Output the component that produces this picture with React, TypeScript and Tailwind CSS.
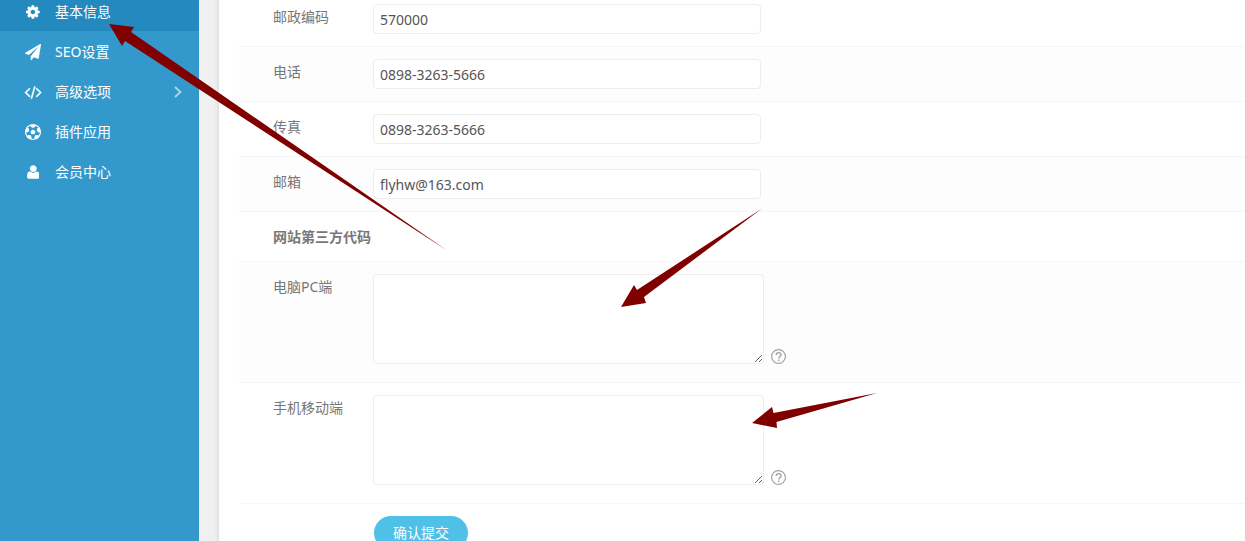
import type { ReactNode } from "react";

type IconProps = { box: string; d: string; className: string; bold?: boolean };

function Glyph({ box, d, className, bold }: IconProps) {
  return (
    <svg viewBox={box} className={className} fill="currentColor" stroke="currentColor" strokeWidth={bold ? 60 : 0} aria-hidden="true">
      <path d={d} />
    </svg>
  );
}

const COG =
  "M1024 896q0-106-75-181t-181-75-181 75-75 181 75 181 181 75 181-75 75-181zm512-109v222q0 12-8 23t-20 13l-185 28q-19 54-39 91 35 50 107 138 10 12 10 25t-9 23q-27 37-99 108t-94 71q-12 0-26-9l-138-108q-44 23-91 38-16 136-29 186-7 28-36 28h-222q-14 0-24.5-8.5t-11.5-21.5l-28-184q-49-16-90-37l-141 107q-10 9-25 9-14 0-25-11-126-114-165-168-7-10-7-23 0-12 8-23 15-21 51-66.5t54-70.5q-27-50-41-99l-183-27q-13-2-21-12.5t-8-23.5v-222q0-12 8-23t19-13l186-28q14-46 39-92-40-57-107-138-10-12-10-24 0-10 9-23 26-36 98.5-107.5t94.5-71.5q13 0 26 10l138 107q44-23 91-38 16-136 29-186 7-28 36-28h222q14 0 24.5 8.5t11.5 21.5l28 184q49 16 90 37l142-107q9-9 24-9 13 0 25 10 129 119 165 170 7 8 7 22 0 12-8 23-15 21-51 66.5t-54 70.5q26 50 41 98l183 28q13 2 21 12.5t8 23.5z";
const PLANE =
  "M1764 11q33 24 27 64l-256 1536q-5 29-32 45-14 8-31 8-11 0-24-5l-453-185-242 295q-18 23-49 23-13 0-22-4-19-7-30.5-23.5t-11.5-36.5v-349l864-1059-1069 925-395-162q-37-14-40-55-2-40 32-59l1664-960q15-9 32-9 20 0 36 11z";
const CODE =
  "M617 1399l-50 50q-10 10-23 10t-23-10l-466-466q-10-10-10-23t10-23l466-466q10-10 23-10t23 10l50 50q10 10 10 23t-10 23l-393 393 393 393q10 10 10 23t-10 23zm591-1067l-373 1291q-4 13-15.5 19.5t-23.5 2.5l-62-17q-13-4-19.5-15.5t-2.5-24.5l373-1291q4-13 15.5-19.5t23.5-2.5l62 17q13 4 19.5 15.5t2.5 24.5zm657 651l-466 466q-10 10-23 10t-23-10l-50-50q-10-10-10-23t10-23l393-393-393-393q-10-10-10-23t10-23l50-50q10-10 23-10t23 10l466 466q10 10 10 23t-10 23z";
const BALL =
  "M609 816l287-208 287 208-109 336h-355zm287-816q182 0 348 71t286 191 191 286 71 348-71 348-191 286-286 191-348 71-348-71-286-191-191-286-71-348 71-348 191-286 286-191 348-71zm619 1350q149-203 149-454v-3l-102 89-240-224 63-323 134 12q-150-206-389-282l53 124-287 159-287-159 53-124q-239 76-389 282l135-12 62 323-240 224-102-89v3q0 251 149 454l30-132 326 40 139 298-116 69q117 39 240 39t240-39l-116-69 139-298 326-40z";
const USER =
  "M1408 1405q0 120-73 189.5t-194 69.5h-874q-121 0-194-69.5t-73-189.5q0-53 3.5-103.5t14-109 26.5-108.5 43-97.5 62-81 85.5-53.5 111.5-20q9 0 42 21.5t74.5 48 108 48 133.5 21.5 133.5-21.5 108-48 74.5-48 42-21.5q61 0 111.5 20t85.5 53.5 62 81 43 97.5 26.5 108.5 14 109 3.5 103.5zm-320-893q0 159-112.5 271.5t-271.5 112.5-271.5-112.5-112.5-271.5 112.5-271.5 271.5-112.5 271.5 112.5 112.5 271.5z";

const menu = [
  { text: "基本信息", box: "0 0 1536 1792", d: COG, active: true },
  { text: "SEO设置", box: "0 0 1792 1792", d: PLANE },
  { text: "高级选项", box: "-60 0 1920 1792", d: CODE, bold: true, sub: true },
  { text: "插件应用", box: "0 0 1792 1792", d: BALL },
  { text: "会员中心", box: "0 0 1408 1792", d: USER },
];

function Sidebar() {
  return (
    <nav className="w-[199px] shrink-0 bg-[#3398cc] text-sm text-white">
      <ul>
        {menu.map((m) => (
          <li key={m.text}>
            <a
              href="#"
              className={`flex h-10 items-center pt-0.5 pr-[17px] pl-6 ${m.active ? "bg-[#2389be]" : ""}`}
            >
              <span className="flex w-[18px] justify-center">
                <Glyph box={m.box} d={m.d} bold={m.bold} className="h-4 w-auto" />
              </span>
              <span className="ml-[13px] flex-1">{m.text}</span>
              {m.sub && (
                <svg viewBox="0 0 8 12" className="h-3 w-2 opacity-60" fill="none" stroke="currentColor" strokeWidth="1.8" aria-hidden="true">
                  <path d="M1 1l5.5 5L1 11" />
                </svg>
              )}
            </a>
          </li>
        ))}
      </ul>
    </nav>
  );
}

function Row({ id, label, shaded, children }: { id: string; label: string; shaded?: boolean; children: ReactNode }) {
  return (
    <div className={`flex border-b border-[#f6f6f6] py-3 pl-[34px] ${shaded ? "bg-[#fdfdfd]" : ""}`}>
      <label htmlFor={id} className="w-[100px] shrink-0 pt-[3px] leading-5">
        {label}
      </label>
      {children}
    </div>
  );
}

function TextField({ id, value }: { id: string; value: string }) {
  return (
    <input
      id={id}
      type="text"
      defaultValue={value}
      className="h-[30px] w-[388px] rounded border border-[#ededed] bg-white px-1.5 text-[#555] outline-none"
    />
  );
}

function HelpIcon() {
  return (
    <svg viewBox="0 0 16 16" className="size-4" fill="none" stroke="#a2a2a6" aria-hidden="true">
      <circle cx="7.5" cy="8.5" r="6.9" strokeWidth="1.2" />
      <path d="M5.2 7C5.2 5.5 6.2 4.6 7.6 4.6s2.5.9 2.500 2.200c0 1.700-2.300 1.800-2.300 3.800M7.800 11.600v1.500" strokeWidth="1.4" />
    </svg>
  );
}

function CodeField({ id }: { id: string }) {
  return (
    <div className="flex items-end gap-[7px] pb-1.5">
      <textarea
        id={id}
        className="block h-[90px] w-[391px] resize rounded border border-[#ededed] bg-white p-1.5 text-[#555] outline-none"
      />
      <button type="button" aria-label="帮助">
        <HelpIcon />
      </button>
    </div>
  );
}

function Arrows() {
  return (
    <svg className="pointer-events-none absolute top-0 left-0 h-[541px] w-[1245px]" fill="#800000" aria-hidden="true">
      <path d="M109 24L134 27L131 32L447 250.5L125 41L122 46Z" />
      <path d="M621 307L634 285L637 290L762 208.5L644 297L646 303Z" />
      <path d="M752 423L772 407L773.5 413L877 393L776.5 422L777 428Z" />
    </svg>
  );
}

export default function App() {
  return (
    <div className="relative h-screen overflow-hidden bg-[#f0f0f0] font-['Noto_Sans','Noto_Sans_CJK_SC',sans-serif]">
      <div className="-mt-[9px] flex min-h-[calc(100vh+9px)]">
        <Sidebar />
        <main className="ml-5 min-w-0 flex-1 bg-white pt-px pl-5 text-sm text-[#777] shadow-[0_0_5px_rgba(0,0,0,0.15)]">
          <form onSubmit={(e) => e.preventDefault()}>
            <Row id="zip" label="邮政编码">
              <TextField id="zip" value="570000" />
            </Row>
            <Row id="tel" label="电话" shaded>
              <TextField id="tel" value="0898-3263-5666" />
            </Row>
            <Row id="fax" label="传真">
              <TextField id="fax" value="0898-3263-5666" />
            </Row>
            <Row id="mail" label="邮箱" shaded>
              <TextField id="mail" value="flyhw@163.com" />
            </Row>
            <h3 className="flex h-[50px] items-center border-b border-[#f6f6f6] pl-[34px] font-bold">网站第三方代码</h3>
            <Row id="pc" label="电脑PC端" shaded>
              <CodeField id="pc" />
            </Row>
            <Row id="mobile" label="手机移动端">
              <CodeField id="mobile" />
            </Row>
            <div className="py-3 pl-[135px]">
              <button type="submit" className="h-[34px] w-[94px] rounded-full bg-[#4fc0e8] text-white">
                确认提交
              </button>
            </div>
          </form>
        </main>
      </div>
      <Arrows />
    </div>
  );
}
